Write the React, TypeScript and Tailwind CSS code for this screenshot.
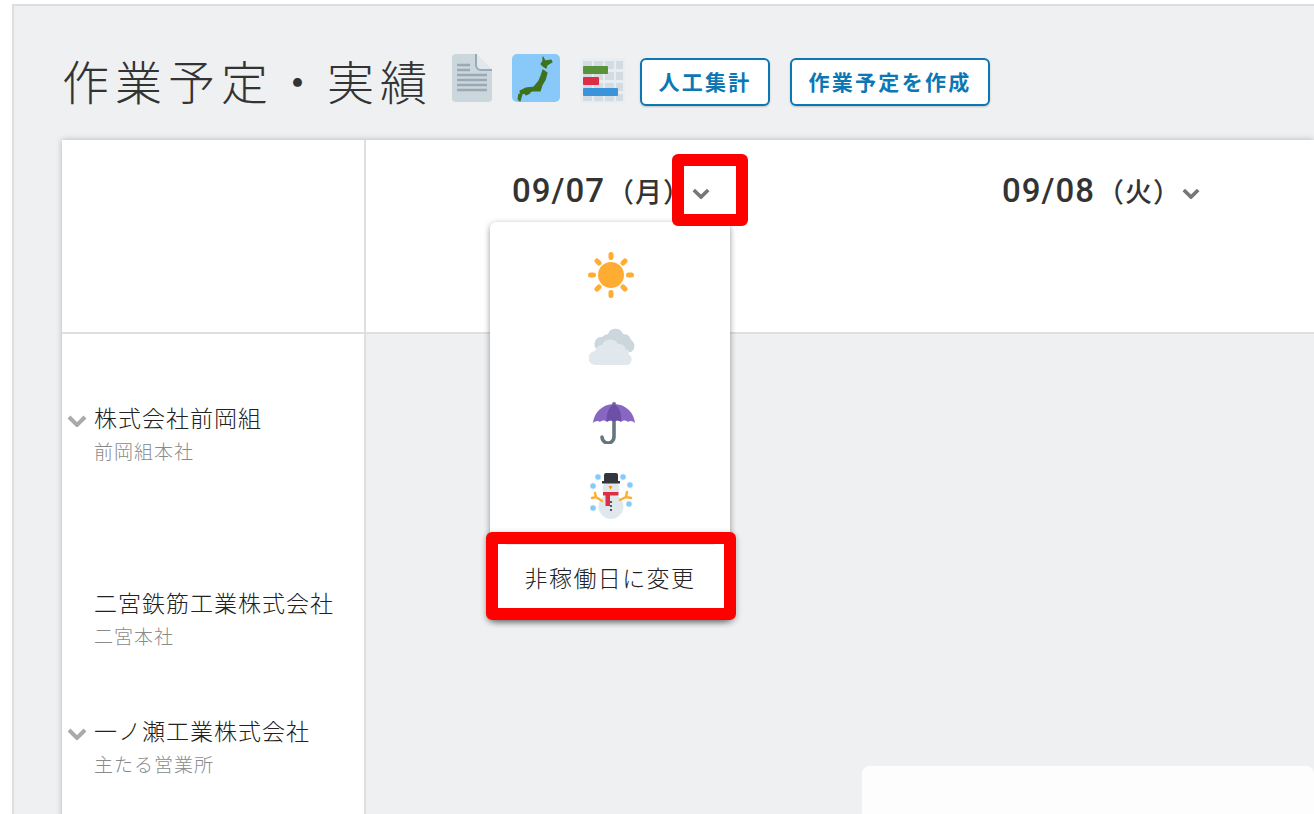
const FONT = "font-['Noto_Sans_CJK_JP','Noto_Sans',sans-serif]";

const companies = [
  { name: "株式会社前岡組", office: "前岡組本社", height: "h-[185px]", chevron: true },
  { name: "二宮鉄筋工業株式会社", office: "二宮本社", height: "h-[128px]", chevron: false },
  { name: "一ノ瀬工業株式会社", office: "主たる営業所", height: "h-[128px]", chevron: true },
];

const dates = [
  { day: "09/07", week: "（月）" },
  { day: "09/08", week: "（火）" },
];

const Chevron = ({ className }: { className: string }) => (
  <svg viewBox="0 0 20 12" className={className} fill="none" stroke="currentColor" strokeWidth="4">
    <path d="M2 2l8 8 8-8" />
  </svg>
);

const PageIcon = () => (
  <svg viewBox="0 0 40 48" className="w-10 h-12">
    <path d="M4 0h20l16 16v28a4 4 0 0 1-4 4H4a4 4 0 0 1-4-4V4a4 4 0 0 1 4-4z" fill="#CCD6DD" />
    <path d="M24 0l16 16H29a5 5 0 0 1-5-5z" fill="#E1E8ED" />
    <path d="M24 0v11a5 5 0 0 0 5 5h11" fill="none" stroke="#99AAB5" strokeWidth="2" />
    <path d="M5 11h13M5 16h13M5 21h30M5 26h30M5 31h30M5 36h30" stroke="#99AAB5" strokeWidth="2.6" />
  </svg>
);

const JapanIcon = () => (
  <svg viewBox="0 0 48 48" className="w-12 h-12">
    <rect width="48" height="48" rx="5" fill="#88C9F9" />
    <path
      d="M31 3l2 4 6-1 1 2-5 3-1 3-3-2-2-2 2-3zM31 16l4 3-2 7-3 5-2 6-8 0-4 2-7 1-1-3 6-3 8-1 5-6 2-5zM7 40l3 0-2 7-2-2zM12 38l6 1-4 2z"
      fill="#3E721D"
      stroke="#3E721D"
      strokeWidth="1.200"
      strokeLinejoin="round"
    />
  </svg>
);

const ChartIcon = () => (
  <svg viewBox="0 0 45 45" className="w-[45px] h-[45px]">
    <rect width="45" height="45" rx="4" fill="#E8EDF1" />
    <path
      d="M3 3h9v8H3zM14 3h9v8h-9zM25 3h9v8h-9zM36 3h7v8h-7zM3 14h9v8H3zM14 14h9v8h-9zM25 14h9v8h-9zM36 14h7v8h-7zM3 25h9v8H3zM14 25h9v8h-9zM25 25h9v8h-9zM36 25h7v8h-7zM3 36h9v7H3zM14 36h9v7h-9zM25 36h9v7h-9zM36 36h7v7h-7z"
      fill="#D3DCE2"
    />
    <rect x="3" y="8" width="25" height="8" rx="1" fill="#5C913B" />
    <rect x="3" y="19" width="16" height="8" rx="1" fill="#DD2E44" />
    <rect x="3" y="30" width="35" height="8" rx="1" fill="#3B94D9" />
  </svg>
);

const SunIcon = () => (
  <svg viewBox="0 0 46 46" className="w-[46px] h-[46px]">
    <circle cx="23" cy="23" r="13" fill="#FFAC33" />
    <path
      d="M23 2.500v3M23 40.500v3M2.500 23h3M40.500 23h3M9 9l2 2M35 35l2 2M9 37l2-2M35 11l2-2"
      stroke="#FFAC33"
      strokeWidth="5"
      strokeLinecap="round"
    />
  </svg>
);

const CloudIcon = () => (
  <svg viewBox="0 0 46 40" className="w-[46px] h-10">
    <path d="M9 24a7 7 0 0 1 4-13 9 9 0 0 1 6-3 8 8 0 0 1 15 0 8 8 0 0 1 8 6 7 7 0 0 1 0 12H9z" fill="#CCD6DD" />
    <path d="M7 39a7 7 0 0 1-1-14 8 8 0 0 1 7-6 9 9 0 0 1 16-1 7 7 0 0 1 8 6 2 2 0 0 1 2 4 6 6 0 0 1 0 11z" fill="#E1E8ED" />
  </svg>
);

const UmbrellaIcon = () => (
  <svg viewBox="0 0 42 42" className="w-[42px] h-[42px]">
    <path d="M21 18v17a6 6 0 0 1-12 0" fill="none" stroke="#67757F" strokeWidth="3.600" strokeLinecap="round" />
    <circle cx="21" cy="2" r="2" fill="#67757F" />
    <path
      d="M21 2C9 2 1 11 0 21c2-2 5-3 7-1 2-2 5-2 7 0 2-2 5-2 7 0 2-2 5-2 7 0 2-2 5-2 7 0 2-2 5-1 7 1C41 11 33 2 21 2z"
      fill="#8767C1"
    />
    <path d="M21 2c-6 3-8 11-7 18 2-2 5-2 7 0 2-2 5-2 7 0 1-7-1-15-7-18z" fill="#6E4FA8" />
  </svg>
);

const SnowmanIcon = () => (
  <svg viewBox="0 0 44 46" className="w-11 h-[46px]">
    <circle cx="21" cy="33.500" r="12.500" fill="#E1E8ED" />
    <circle cx="21" cy="16" r="8.500" fill="#E1E8ED" />
    <path d="M14 2a2 2 0 0 1 2-2h10a2 2 0 0 1 2 2v6h2v2.500H12V8h2z" fill="#31373D" />
    <path d="M18.500 13h4l-2 3.500z" fill="#F4900C" />
    <path d="M13 19h15.500v3.500H20V33h-4.500V22.500H13z" fill="#DD2E44" />
    <circle cx="21" cy="29" r="1.100" fill="#31373D" />
    <circle cx="21" cy="33" r="1.100" fill="#31373D" />
    <circle cx="21" cy="37" r="1.100" fill="#31373D" />
    <path d="M12 28l-6-4-4 1M6 24l-1-4M30 27l6-3 5 1M36 24l1-5" fill="none" stroke="#FFAC33" strokeWidth="2.400" strokeLinecap="round" />
    <g stroke="#88C9F9" strokeWidth="1.500" strokeLinecap="round">
      <path d="M8 1.500v5M5.500 4h5M6.200 2.200l3.600 3.600M9.800 2.200l-3.600 3.600" />
      <path d="M33 1.500v5M30.500 4h5M31.200 2.200l3.600 3.600M34.800 2.200l-3.600 3.600" />
      <path d="M3 10.500v5M0.500 13h5M1.200 11.200l3.600 3.600M4.800 11.200l-3.600 3.600" />
      <path d="M40 9.500v5M37.500 12h5M38.200 10.200l3.600 3.600M41.800 10.200l-3.600 3.600" />
      <path d="M3 32.500v5M0.500 35h5M1.200 33.200l3.600 3.600M4.800 33.200l-3.600 3.600" />
      <path d="M39 28.500v5M36.500 31h5M37.200 29.200l3.600 3.600M40.800 29.200l-3.600 3.600" />
    </g>
  </svg>
);

const DateHead = ({ day, week }: { day: string; week: string }) => (
  <div className="w-[490px] shrink-0 flex justify-center pt-[33px]">
    <div className="flex items-start w-[198px] h-9">
      <span className="w-[180px] leading-9 font-medium text-[#333] whitespace-nowrap [text-spacing-trim:space-all]">
        <span className="font-['Roboto',sans-serif] text-[33px] tracking-[1px]">{day}</span>
        <span className="ml-[2px] text-[27px] tracking-[1px]">{week}</span>
      </span>
      <Chevron className="w-[18px] h-[11px] mt-[15px] text-[#777]" />
    </div>
  </div>
);

const App = () => {
  return (
    <div lang="ja" className={`${FONT} flex w-[1314px] h-[814px] overflow-hidden bg-white`}>
      <div className="w-3 shrink-0" />
      <div className="flex-1 min-w-0 flex flex-col pt-1">
        <main className="flex-1 min-h-0 border-t-2 border-l-2 border-[#dcdee0] bg-[#eff0f2] pl-[48px]">
          <div className="flex items-center h-[134px] pt-[18px]">
            <h1 className="text-[47px] leading-[60px] font-light text-[#333] tracking-[6px] whitespace-nowrap w-[390px] -mt-[4px]">
              作業予定・実績
            </h1>
            <div className="flex items-center -mt-[8px]">
              <PageIcon />
              <div className="ml-5"><JapanIcon /></div>
              <div className="ml-5 mt-[5px]"><ChartIcon /></div>
            </div>
            <button className="ml-[15px] h-12 w-[130px] rounded-md border-2 border-[#0b78b5] bg-white text-[21px] font-bold tracking-[2.300px] text-[#0b78b5] shadow-[0_1px_2px_rgba(0,0,0,0.2)]">
              人工集計
            </button>
            <button className="ml-5 h-12 w-[200px] rounded-md border-2 border-[#0b78b5] bg-white text-[21px] font-bold tracking-[2.300px] text-[#0b78b5] shadow-[0_1px_2px_rgba(0,0,0,0.2)]">
              作業予定を作成
            </button>
          </div>

          <div className="flex h-[700px] shadow-[0_0_6px_rgba(0,0,0,0.25)]">
            <aside className="w-[304px] shrink-0 bg-white border-r-2 border-[#dfdfdf]">
              <div className="h-[194px] border-b-2 border-[#dfdfdf] box-border" />
              {companies.map((c) => (
                <div key={c.name} className={`${c.height} pt-[68px] pl-[5px] flex`}>
                  <div className="w-[27px] shrink-0 pt-[13px]">
                    {c.chevron && <Chevron className="w-5 h-3 text-[#aaa]" />}
                  </div>
                  <div>
                    <p className="text-[23px] leading-[30px] tracking-[1px] font-light text-[#222] whitespace-nowrap">{c.name}</p>
                    <p className="mt-[4px] text-[19px] leading-[30px] tracking-[1px] font-light text-[#8a8a8a] whitespace-nowrap">{c.office}</p>
                  </div>
                </div>
              ))}
            </aside>

            <section className="flex-1 min-w-0 relative">
              <div className="flex h-[194px] bg-white border-b-2 border-[#dfdfdf] box-border">
                {dates.map((d) => (
                  <DateHead key={d.day} day={d.day} week={d.week} />
                ))}
              </div>
              <div className="pl-[496px] pt-[432px]">
                <div className="h-[200px] rounded-t-lg bg-[#fdfdfd]" />
              </div>

              {/* weather menu */}
              <div className="absolute left-[124px] top-[82px] w-[240px] h-[398px] rounded-md bg-white shadow-[0_2px_6px_rgba(0,0,0,0.4)] flex flex-col items-center">
                <div className="mt-[30px] ml-[2px]"><SunIcon /></div>
                <div className="mt-[28px] ml-[4px]"><CloudIcon /></div>
                <div className="mt-[36px] ml-[8px]"><UmbrellaIcon /></div>
                <div className="mt-[29px] ml-[4px]"><SnowmanIcon /></div>
                <div className="mt-[24px] h-[2px] w-[208px] bg-[#e6e6e6]" />
                <div className="mt-[17px] text-[23px] leading-[30px] tracking-[1.400px] text-[#222] font-light whitespace-nowrap">非稼働日に変更</div>
              </div>

              {/* red call-outs */}
              <div className="absolute left-[306px] top-[14px] w-[76px] h-[72px] rounded-md border-[12px] border-[#ff0000]" />
              <div className="absolute left-[120px] top-[392px] w-[250px] h-[88px] rounded-md border-[12px] border-[#ff0000] shadow-[0_2px_6px_rgba(0,0,0,0.3)]" />
            </section>
          </div>
        </main>
      </div>
    </div>
  );
};

export default App;
